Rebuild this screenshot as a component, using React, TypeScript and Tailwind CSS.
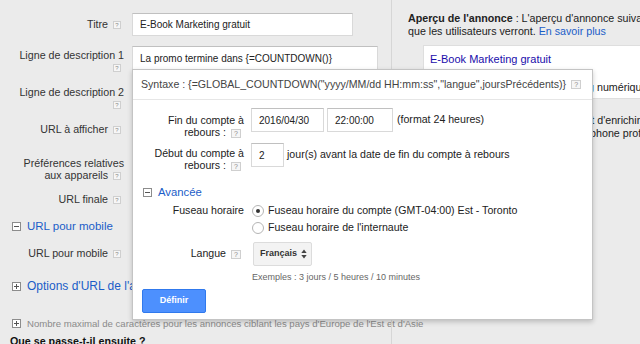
import React from 'react';

const font = "font-['Liberation_Sans',Arial,Helvetica,sans-serif]";

// small "?" help box
const Help = ({ big = false }: { big?: boolean }) => (
    <span
        className={`inline-flex items-center justify-center align-middle border border-[#cfcfcf] bg-[#f6f6f6] text-[#8a8a8a] leading-none ${big ? 'w-[10px] h-[9px] text-[7px]' : 'w-[8px] h-[8px] text-[6px]'} ml-[5px] mr-[3px]`}
    >
        ?
    </span>
);

// expand / collapse box
const Toggle = ({ open }: { open: boolean }) => (
    <svg width="9" height="9" viewBox="0 0 9 9" className="shrink-0">
        <rect x="0.5" y="0.5" width="8" height="8" fill="#fff" stroke="#8c8c8c" />
        <line x1="2" y1="4.5" x2="7" y2="4.5" stroke="#555" />
        {!open && <line x1="4.5" y1="2" x2="4.5" y2="7" stroke="#555" />}
    </svg>
);

const Field = ({ w, h = 24, value }: { w: number; h?: number; value?: string }) => (
    <div
        className="bg-white border border-[#d9d9d9] border-t-[#c0c0c0] flex items-center pl-[7px] text-[10px] text-[#222] whitespace-nowrap"
        style={{ width: w, height: h }}
    >
        {value}
    </div>
);

const Radio = ({ checked }: { checked: boolean }) => (
    <span className="w-[12px] h-[12px] rounded-full border border-[#b5b5b5] bg-white flex items-center justify-center shrink-0">
        {checked && <span className="w-[4px] h-[4px] rounded-full bg-[#333]" />}
    </span>
);

const LeftRow = ({ h, label, pt = 3, children }: { h: number; label: React.ReactNode; pt?: number; children?: React.ReactNode }) => (
    <div className="flex items-start shrink-0" style={{ height: h }}>
        <div className="w-[124px] pl-[10px] text-right text-[10.7px] leading-[12px] text-[#333]" style={{ paddingTop: pt }}>
            {label}
        </div>
        <div className="ml-[8px]">{children}</div>
    </div>
);

const PopLabel = ({ children, pt = 0 }: { children: React.ReactNode; pt?: number }) => (
    <div className="w-[111px] text-right text-[10.6px] leading-[12px] text-[#222] shrink-0" style={{ paddingTop: pt }}>
        {children}
    </div>
);

const App = () => {
    return (
        <div className={`${font} relative w-[640px] h-[344px] overflow-hidden bg-[#ebebeb] flex`}>
            {/* Form column */}
            <div className="w-[391px] shrink-0 flex flex-col pt-[13px]">
                <LeftRow h={33} pt={5} label={<>Titre<Help /></>}>
                    <Field w={221} h={23} value="E-Book Marketing gratuit" />
                </LeftRow>
                <LeftRow h={37} label={<>Ligne de description 1 <Help /></>}>
                    <Field w={246} value="La promo termine dans {=COUNTDOWN()}" />
                </LeftRow>
                <LeftRow h={37} label={<>Ligne de description 2 <Help /></>}>
                    <Field w={246} />
                </LeftRow>
                <LeftRow h={34} label={<>URL à afficher<Help /></>}>
                    <Field w={246} />
                </LeftRow>
                <LeftRow h={36} label={<>Préférences relatives aux appareils<Help /></>}>
                    <Field w={246} />
                </LeftRow>
                <LeftRow h={29} label={<>URL finale<Help /></>}>
                    <Field w={246} />
                </LeftRow>
                <div className="h-[26px] shrink-0 flex items-start gap-[6px] pl-[12px]">
                    <span className="pt-[3px]"><Toggle open /></span>
                    <span className="text-[11.5px] leading-[14px] text-[#1a5dc8] whitespace-nowrap">URL pour mobile</span>
                </div>
                <LeftRow h={33} pt={2} label={<>URL pour mobile<Help /></>}>
                    <Field w={246} />
                </LeftRow>
                <div className="h-[35px] shrink-0 flex items-start gap-[6px] pl-[12px]">
                    <span className="pt-[4px]"><Toggle open={false} /></span>
                    <span className="text-[12px] leading-[16px] text-[#1a5dc8] whitespace-nowrap">Options d'URL de l'annonce (avancé)</span>
                </div>
                <div className="h-[21px] shrink-0 flex items-center gap-[6px] pl-[12px]">
                    <Toggle open={false} />
                    <span className="text-[9.6px] leading-[14px] text-[#8a8a8a] whitespace-nowrap">
                        Nombre maximal de caractères pour les annonces ciblant les pays d'Europe de l'Est et d'Asie
                    </span>
                </div>
                <div className="shrink-0 pl-[10px] text-[10.7px] leading-[14px] font-bold text-[#111] whitespace-nowrap">
                    Que se passe-t-il ensuite ?
                </div>
            </div>

            {/* Preview column */}
            <div className="flex-1 border-l border-[#d6d6d6] pl-[16px] pt-[12px] text-[10.7px] leading-[13px] text-[#222] whitespace-nowrap">
                <div>
                    <span className="font-bold">Aperçu de l'annonce</span> : L'aperçu d'annonce suivant peut différer de celui
                </div>
                <div>
                    que les utilisateurs verront. <span className="text-[#1a5dc8]">En savoir plus</span>
                </div>
                <div className="mt-[7px] ml-[15px] h-[54px] bg-white border border-[#dedede] pl-[6px] pt-[6px] leading-[14px]">
                    <div className="text-[11px] text-[#1a0dab]">E-Book Marketing gratuit</div>
                    <div className="text-[#006621]">www.exemple.com</div>
                    <div>Téléchargez le guide du marketing numérique</div>
                </div>
                <div className="mt-[15px]">
                    <div>Les extensions d'annonces vous aident d'enrichir vos annonces</div>
                    <div>d'informations, dont un numéro de téléphone professionnel</div>
                </div>
            </div>

            {/* Countdown popup */}
            <div className="absolute left-[132px] top-[69px] w-[461px] h-[251px] bg-white border border-[#c4c4c4] shadow-[0_2px_5px_rgba(0,0,0,0.2)] flex flex-col">
                <div className="h-[30px] shrink-0 border-b border-[#e6e6e6] flex items-center pl-[8px] text-[10.6px] text-[#444] whitespace-nowrap">
                    Syntaxe : {'{=GLOBAL_COUNTDOWN("yyyy/MM/dd HH:mm:ss","langue",joursPrécédents)}'}
                    <Help big />
                </div>

                <div className="flex flex-col pt-[8px]">
                    <div className="flex items-start h-[35px]">
                        <PopLabel pt={6}>Fin du compte à rebours :<Help big /></PopLabel>
                        <div className="ml-[7px] flex items-center gap-[3px]">
                            <Field w={73} value="2016/04/30" />
                            <Field w={66} value="22:00:00" />
                            <span className="text-[10.6px] text-[#222] ml-[1px]">(format 24 heures)</span>
                        </div>
                    </div>

                    <div className="flex items-start h-[42px]">
                        <PopLabel pt={4}>Début du compte à rebours :<Help big /></PopLabel>
                        <div className="ml-[7px] flex items-center gap-[3px]">
                            <Field w={33} value="2" />
                            <span className="text-[10.6px] text-[#222]">jour(s) avant la date de fin du compte à rebours</span>
                        </div>
                    </div>

                    <div className="h-[14px] flex items-center gap-[6px] pl-[10px]">
                        <Toggle open />
                        <span className="text-[11.3px] leading-[14px] text-[#1a5dc8]">Avancée</span>
                    </div>

                    <div className="flex items-start mt-[3px]">
                        <div className="w-[111px] text-right text-[10.6px] leading-[17px] text-[#222]">Fuseau horaire</div>
                        <div className="ml-[8px] flex flex-col text-[10.6px] leading-[17px] text-[#222]">
                            <div className="flex items-center gap-[4px]">
                                <Radio checked />
                                <span>Fuseau horaire du compte (GMT-04:00) Est - Toronto</span>
                            </div>
                            <div className="flex items-center gap-[4px]">
                                <Radio checked={false} />
                                <span>Fuseau horaire de l'internaute</span>
                            </div>
                        </div>
                    </div>

                    <div className="flex items-center mt-[6px]">
                        <div className="w-[111px] text-right text-[10.6px] text-[#222]">
                            Langue<Help big />
                        </div>
                        <div className="ml-[9px] w-[59px] h-[24px] rounded-[2px] border border-[#dcdcdc] bg-[#f3f3f3] flex items-center pl-[6px] gap-[4px]">
                            <span className="text-[9px] font-bold text-[#333]">Français</span>
                            <svg width="6" height="10" viewBox="0 0 6 10">
                                <path d="M3 0.5 L5.7 4 H0.3 Z M3 9.5 L5.7 6 H0.3 Z" fill="#444" />
                            </svg>
                        </div>
                    </div>

                    <div className="ml-[119px] mt-[5px] text-[9px] leading-[12px] text-[#666]">
                        Exemples : 3 jours / 5 heures / 10 minutes
                    </div>

                    <div className="ml-[9px] mt-[6px] w-[64px] h-[24px] rounded-[2px] bg-[#4d90fe] border border-[#3079ed] flex items-center justify-center text-[9px] font-bold text-white">
                        Définir
                    </div>
                </div>
            </div>
        </div>
    );
};

export default App;
